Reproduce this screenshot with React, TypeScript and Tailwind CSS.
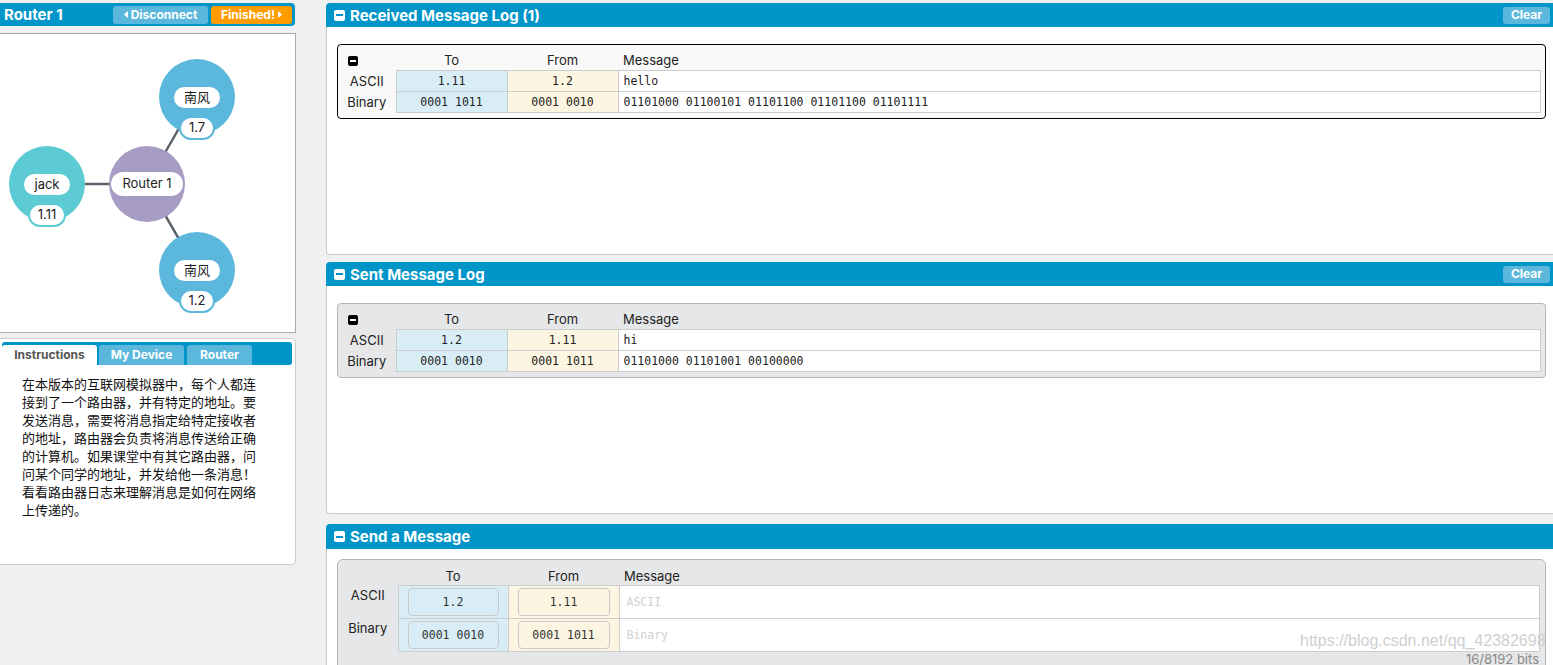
import React from "react";

function WhiteMinus() {
  return (
    <span className="w-[11px] h-[11px] bg-white rounded-[2px] flex items-center justify-center shrink-0">
      <span className="w-[7px] h-[2px] bg-[#0095c9]" />
    </span>
  );
}

function BlackMinus() {
  return (
    <span className="w-[10px] h-[10px] bg-black rounded-[2px] flex items-center justify-center">
      <span className="w-[6px] h-[2px] bg-white" />
    </span>
  );
}

function PanelHeader({ title, clear, tall }: { title: string; clear?: boolean; tall?: boolean }) {
  return (
    <div
      className={`${tall ? "h-[25px]" : "h-[24px]"} shrink-0 bg-[#0095c9] rounded-t-[4px] flex items-center pl-[8px] pr-[7px] gap-[5px]`}
    >
      <WhiteMinus />
      <span className="text-white font-bold text-[15px] leading-none">{title}</span>
      {clear && (
        <span className="ml-auto h-[17px] w-[47px] bg-[#5bb8dc] rounded-[3px] text-white font-bold text-[12px] flex items-center justify-center">
          Clear
        </span>
      )}
    </div>
  );
}

function LogTable({
  to,
  from,
  ascii,
  binary,
  toBin,
  fromBin,
  boxCls,
}: {
  to: string;
  from: string;
  ascii: string;
  binary: string;
  toBin: string;
  fromBin: string;
  boxCls: string;
}) {
  const mono = "font-['DejaVu_Sans_Mono',monospace] text-[11.5px] leading-[14px] text-[#222]";
  return (
    <div className={`border rounded-[4px] pt-[6px] pb-[5px] pr-[4px] ${boxCls}`}>
      <table className="w-full table-fixed border-collapse text-[13px] leading-[16px] text-[#222]">
        <colgroup>
          <col className="w-[58px]" />
          <col className="w-[111px]" />
          <col className="w-[111px]" />
          <col />
        </colgroup>
        <thead>
          <tr className="h-[19px]">
            <th className="pl-[10px] font-normal">
              <BlackMinus />
            </th>
            <th className="font-normal text-center">To</th>
            <th className="font-normal text-center">From</th>
            <th className="font-normal text-left pl-[5px]">Message</th>
          </tr>
        </thead>
        <tbody>
          <tr className="h-[21px]">
            <td className="text-center">ASCII</td>
            <td className={`border border-[#ccc] bg-[#d9edf7] text-center ${mono}`}>{to}</td>
            <td className={`border border-[#ccc] bg-[#fcf5e1] text-center ${mono}`}>{from}</td>
            <td className={`border border-[#ccc] bg-white pl-[5px] ${mono}`}>{ascii}</td>
          </tr>
          <tr className="h-[21px]">
            <td className="text-center">Binary</td>
            <td className={`border border-[#ccc] bg-[#d9edf7] text-center ${mono}`}>{toBin}</td>
            <td className={`border border-[#ccc] bg-[#fcf5e1] text-center ${mono}`}>{fromBin}</td>
            <td className={`border border-[#ccc] bg-white pl-[5px] ${mono}`}>{binary}</td>
          </tr>
        </tbody>
      </table>
    </div>
  );
}

function Node({
  left,
  top,
  name,
  addr,
  circleCls,
  borderCls,
}: {
  left: number;
  top: number;
  name: string;
  addr: string;
  circleCls: string;
  borderCls: string;
}) {
  return (
    <div className="absolute w-[76px] h-[76px]" style={{ left, top }}>
      <div className={`absolute inset-0 rounded-full ${circleCls}`} />
      <div className="absolute left-0 right-0 top-[28px] flex justify-center">
        <span className="h-[21px] px-[10px] bg-white rounded-full text-[13px] text-[#222] flex items-center font-['Inter','Noto_Sans_CJK_SC',sans-serif]">
          {name}
        </span>
      </div>
      <div className="absolute left-0 right-0 top-[57px] flex justify-center">
        <span
          className={`h-[24px] min-w-[36px] px-[8px] bg-white rounded-full border-2 ${borderCls} text-[13px] text-[#222] flex items-center justify-center`}
        >
          {addr}
        </span>
      </div>
    </div>
  );
}

export default function App() {
  const mono = "font-['DejaVu_Sans_Mono',monospace] text-[11.5px]";
  return (
    <div className="w-[1553px] h-[665px] overflow-hidden bg-[#f0f0f0] flex items-start relative font-['Inter','Noto_Sans_CJK_SC',sans-serif]">
      {/* Left column */}
      <div className="w-[300px] -ml-[4px] shrink-0 flex flex-col pt-[3px]">
        <div className="h-[23px] shrink-0 mr-[1px] bg-[#0095c9] rounded-[4px] flex items-center pl-[8px] pr-[3px]">
          <span className="text-white font-bold text-[15px] leading-none">Router 1</span>
          <span className="ml-auto w-[95px] h-[18px] bg-[#5bb8dc] rounded-[3px] text-white font-bold text-[12px] flex items-center justify-center gap-[3px]">
            <svg width="4" height="7" viewBox="0 0 4 7">
              <path d="M4 0 L0 3.5 L4 7 Z" fill="white" />
            </svg>
            Disconnect
          </span>
          <span className="ml-[3px] w-[81px] h-[18px] bg-[#ff9d00] rounded-[3px] text-white font-bold text-[12px] flex items-center justify-center gap-[3px]">
            Finished!
            <svg width="4" height="7" viewBox="0 0 4 7">
              <path d="M0 0 L4 3.5 L0 7 Z" fill="white" />
            </svg>
          </span>
        </div>

        <div className="mt-[7px] h-[300px] shrink-0 border border-[#aaa] bg-white relative">
          <svg className="absolute inset-0" width="298" height="298">
            <line x1="50" y1="150" x2="150" y2="150" stroke="#5a626c" strokeWidth="2.5" />
            <line x1="150" y1="150" x2="200" y2="63" stroke="#5a626c" strokeWidth="2.5" />
            <line x1="150" y1="150" x2="200" y2="236" stroke="#5a626c" strokeWidth="2.5" />
          </svg>
          <Node left={12} top={112} name="jack" addr="1.11" circleCls="bg-[#5ccbd3]" borderCls="border-[#5ccbd3]" />
          <Node left={162} top={25} name="南风" addr="1.7" circleCls="bg-[#5bb8dc]" borderCls="border-[#5bb8dc]" />
          <Node left={162} top={198} name="南风" addr="1.2" circleCls="bg-[#5bb8dc]" borderCls="border-[#5bb8dc]" />
          <div className="absolute w-[76px] h-[76px] left-[112px] top-[112px]">
            <div className="absolute inset-0 rounded-full bg-[#a69cc4]" />
            <div className="absolute left-0 right-0 top-[26px] flex justify-center">
              <span className="h-[24px] w-[72px] bg-white rounded-full text-[13px] text-[#222] flex items-center justify-center">
                Router 1
              </span>
            </div>
          </div>
        </div>

        <div className="mt-[5px] h-[227px] shrink-0 border border-[#ccc] rounded-[4px] bg-white p-[3px]">
          <div className="ml-[2px] h-[23px] bg-[#0095c9] rounded-[3px] flex items-end gap-[2px] pt-[3px]">
            <span className="w-[95px] h-[20px] bg-white rounded-t-[3px] text-[#555] font-bold text-[12px] flex items-center justify-center">
              Instructions
            </span>
            <span className="w-[85px] h-[20px] bg-[#5bb8dc] rounded-t-[3px] text-white font-bold text-[12px] flex items-center justify-center">
              My Device
            </span>
            <span className="ml-[1px] w-[65px] h-[20px] bg-[#5bb8dc] rounded-t-[3px] text-white font-bold text-[12px] flex items-center justify-center">
              Router
            </span>
          </div>
          <div className="mt-[10px] pl-[22px] text-[13px] leading-[18px] text-[#111] font-['Noto_Sans_CJK_SC',sans-serif] whitespace-nowrap">
            在本版本的互联网模拟器中，每个人都连
            <br />
            接到了一个路由器，并有特定的地址。要
            <br />
            发送消息，需要将消息指定给特定接收者
            <br />
            的地址，路由器会负责将消息传送给正确
            <br />
            的计算机。如果课堂中有其它路由器，问
            <br />
            问某个同学的地址，并发给他一条消息！
            <br />
            看看路由器日志来理解消息是如何在网络
            <br />
            上传递的。
          </div>
        </div>
      </div>

      {/* Right column */}
      <div className="ml-[30px] w-[1231px] shrink-0 flex flex-col pt-[3px]">
        <PanelHeader title="Received Message Log (1)" clear />
        <div className="h-[228px] shrink-0 bg-white border border-t-0 border-[#c8c8c8] rounded-b-[4px] pt-[17px] px-[10px]">
          <LogTable
            boxCls="border-black bg-[#f9f9f9]"
            to="1.11"
            from="1.2"
            ascii="hello"
            toBin="0001 1011"
            fromBin="0001 0010"
            binary="01101000 01100101 01101100 01101100 01101111"
          />
        </div>

        <div className="mt-[7px] shrink-0">
          <PanelHeader title="Sent Message Log" clear />
        </div>
        <div className="h-[228px] shrink-0 bg-white border border-t-0 border-[#c8c8c8] rounded-b-[4px] pt-[17px] px-[10px]">
          <LogTable
            boxCls="border-[#b5b5b5] bg-[#e6e7e8]"
            to="1.2"
            from="1.11"
            ascii="hi"
            toBin="0001 0010"
            fromBin="0001 1011"
            binary="01101000 01101001 00100000"
          />
        </div>

        <div className="mt-[10px] shrink-0">
          <PanelHeader title="Send a Message" tall />
        </div>
        <div className="h-[200px] shrink-0 bg-white border border-t-0 border-[#c8c8c8] pt-[10px] px-[10px]">
          <div className="h-[200px] border border-[#b5b5b5] rounded-[6px] bg-[#e6e7e8] pt-[7px] pr-[5px]">
            <table className="w-full table-fixed border-collapse text-[13px] leading-[16px] text-[#222]">
              <colgroup>
                <col className="w-[60px]" />
                <col className="w-[110px]" />
                <col className="w-[111px]" />
                <col />
              </colgroup>
              <thead>
                <tr className="h-[18px]">
                  <th />
                  <th className="font-normal text-center">To</th>
                  <th className="font-normal text-center">From</th>
                  <th className="font-normal text-left pl-[5px]">Message</th>
                </tr>
              </thead>
              <tbody>
                <tr className="h-[33px]">
                  <td className="text-center align-top pt-[2px]">ASCII</td>
                  <td className="border border-[#ccc] bg-[#d9edf7] px-[9px] py-0">
                    <div className={`h-[28px] border border-[#c8c8c8] rounded-[4px] bg-[#d9edf7] flex items-center justify-center ${mono} text-[#333]`}>
                      1.2
                    </div>
                  </td>
                  <td className="border border-[#ccc] bg-[#fcf5e1] px-[9px] py-0">
                    <div className={`h-[28px] border border-[#c8c8c8] rounded-[4px] bg-[#fcf5e1] flex items-center justify-center ${mono} text-[#333]`}>
                      1.11
                    </div>
                  </td>
                  <td className={`border border-[#ccc] bg-white pl-[7px] ${mono} text-[#d0d0d0]`}>ASCII</td>
                </tr>
                <tr className="h-[33px]">
                  <td className="text-center align-top pt-[2px]">Binary</td>
                  <td className="border border-[#ccc] bg-[#d9edf7] px-[9px] py-0">
                    <div className={`h-[28px] border border-[#c8c8c8] rounded-[4px] bg-[#d9edf7] flex items-center justify-center ${mono} text-[#333]`}>
                      0001 0010
                    </div>
                  </td>
                  <td className="border border-[#ccc] bg-[#fcf5e1] px-[9px] py-0">
                    <div className={`h-[28px] border border-[#c8c8c8] rounded-[4px] bg-[#fcf5e1] flex items-center justify-center ${mono} text-[#333]`}>
                      0001 1011
                    </div>
                  </td>
                  <td className={`border border-[#ccc] bg-white pl-[7px] ${mono} text-[#d0d0d0]`}>Binary</td>
                </tr>
              </tbody>
            </table>
            <div className="text-right pr-[1px] text-[13px] text-[#888] leading-[14px]">16/8192 bits</div>
          </div>
        </div>
      </div>

      <div className="absolute left-[1300px] top-[632px] text-[16px] text-[#cfcfcf] font-['Liberation_Sans',sans-serif] leading-[18px] pointer-events-none">
        https://blog.csdn.net/qq_42382698
      </div>
    </div>
  );
}
